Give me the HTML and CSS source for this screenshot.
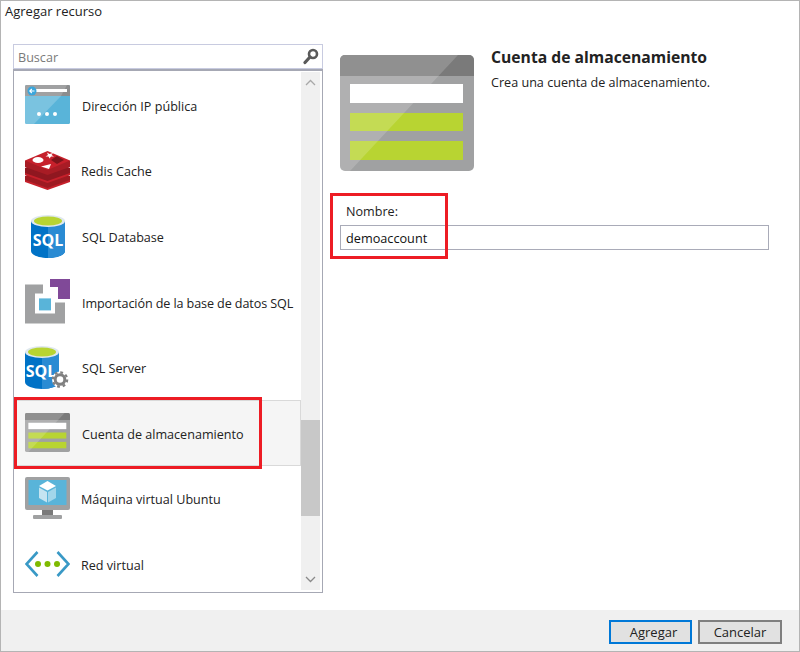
FILE: index.html
```html
<!DOCTYPE html>
<html lang="es">
<head>
<meta charset="utf-8">
<title>Agregar recurso</title>
<link rel="stylesheet" href="styles.css">
</head>
<body>
<svg class="defs" width="0" height="0" aria-hidden="true">
  <symbol id="storage" viewBox="0 0 134 116">
    <rect width="134" height="116" rx="5" fill="#a0a1a2"/>
    <path d="M5 0H129a5 5 0 0 1 5 5V21H0V5a5 5 0 0 1 5-5z" fill="#7a7a7a"/>
    <rect x="10" y="29" width="113" height="19" fill="#fff"/>
    <rect x="10" y="58" width="113" height="18" fill="#b8d432"/>
    <rect x="10" y="86" width="113" height="19" fill="#b8d432"/>
    <path d="M5 0H118L10 116H5a5 5 0 0 1-5-5V5a5 5 0 0 1 5-5z" fill="#fff" opacity=".17"/>
  </symbol>
  <symbol id="cyl" viewBox="0 0 34 43">
    <path d="M0 6V36C0 40 8 43 17 43S34 40 34 36V6z" fill="#0072c6"/>
    <path d="M17 6H34V36C34 40 26 43 17 43z" fill="#2a8bd3"/>
    <ellipse cx="17" cy="6" rx="17" ry="6" fill="#dfe8ef"/>
    <ellipse cx="17" cy="6" rx="14" ry="4.6" fill="#b8d432"/>
  </symbol>
</svg>

<main class="window">
  <header class="title">Agregar recurso</header>

  <div class="body">
    <section class="picker">
      <div class="search">
        <input class="search-input" type="text" placeholder="Buscar">
        <svg class="search-icon" width="16" height="17" viewBox="0 0 16 17">
          <circle cx="10" cy="6" r="4" fill="none" stroke="#5a5a5a" stroke-width="2.6"/>
          <path d="M7 9L2 14.5" stroke="#5a5a5a" stroke-width="3.2" stroke-linecap="round"/>
        </svg>
      </div>

      <div class="listbox">
        <ul class="list">
          <li class="row">
            <svg class="icon" viewBox="0 0 45 46">
              <rect y="3" width="45" height="39" rx="1.5" fill="#59b4d9"/>
              <path d="M1.5 3H43.500a1.500 1.500 0 0 1 1.500 1.500V14H0V4.500A1.500 1.500 0 0 1 1.500 3z" fill="#a0a1a2"/>
              <path d="M36 14H45V4.500A1.500 1.500 0 0 0 43.500 3H42z" fill="#8c8d8e"/>
              <path d="M36 14L9 42H1.500A1.500 1.500 0 0 1 0 40.500V14z" fill="#fff" opacity=".2"/>
              <rect x="9" y="7" width="33" height="3" fill="#fff"/>
              <circle cx="7" cy="9" r="4.500" fill="#3aa6dc"/>
              <path d="M9.500 9H5M6.800 7L4.800 9L6.800 11" fill="none" stroke="#fff" stroke-width="1.100"/>
              <circle cx="14" cy="32" r="2" fill="#fff"/>
              <circle cx="22" cy="32" r="2" fill="#fff"/>
              <circle cx="30" cy="32" r="2" fill="#fff"/>
            </svg>
            <span class="label">Dirección IP pública</span>
          </li>
          <li class="row row-tight">
            <svg class="icon" viewBox="0 0 45 46">
              <path d="M0 29L22.500 20L45 29V34L22.500 42L0 34z" fill="#9e1a22"/>
              <path d="M0 21L22.500 12L45 21V27L22.500 35L0 27z" fill="#8f1720"/>
              <path d="M0 13.500V20L22.500 28L45 20V13.500z" fill="#a81c25"/>
              <path d="M0 26V28L22.500 36L45 28V26L22.500 34z" fill="#c6202b"/>
              <path d="M0 33V35L22.500 43L45 35V33L22.500 41z" fill="#c6202b"/>
              <path d="M22.500 4L45 13.500L22.500 23L0 13.500z" fill="#c6202b"/>
              <ellipse cx="13" cy="13" rx="5.500" ry="3" fill="#fff"/>
              <path d="M22 5.500L24.500 7L28 6L26.500 8L29 9.500H26L24.500 11.500L23.500 9.500H20.500L23 8z" fill="#fff"/>
              <path d="M16 19.500L26 17L24 22z" fill="#fff"/>
              <path d="M32 9L39 13L32 17L26 13z" fill="#7d141b"/>
            </svg>
            <span class="label">Redis Cache</span>
          </li>
          <li class="row">
            <svg class="icon" viewBox="0 0 45 46">
              <use href="#cyl" x="6" y="2" width="34" height="43"/>
              <text class="sql" x="23" y="33">SQL</text>
            </svg>
            <span class="label">SQL Database</span>
          </li>
          <li class="row">
            <svg class="icon" viewBox="0 0 45 46">
              <path d="M0 5.400H18V14.400H10V34.400H30V23.400H40V44.400H0z" fill="#a0a1a2"/>
              <rect x="14" y="19.400" width="12" height="12" fill="#59b4d9"/>
              <path d="M25 0H45V20H33V8H25z" fill="#804998"/>
            </svg>
            <span class="label label-long">Importación de la base de datos SQL</span>
          </li>
          <li class="row">
            <svg class="icon" viewBox="0 0 45 46">
              <use href="#cyl" x="0" y="2" width="34" height="43"/>
              <text class="sql" x="16" y="33">SQL</text>
              <circle cx="35" cy="35.500" r="8" fill="#fff"/>
              <circle cx="35" cy="35.500" r="4.800" fill="none" stroke="#808080" stroke-width="3"/>
              <circle cx="35" cy="35.500" r="7.200" fill="none" stroke="#808080" stroke-width="2.200" stroke-dasharray="2.800 2.860"/>
            </svg>
            <span class="label">SQL Server</span>
          </li>
          <li class="row row-selected">
            <svg class="icon icon-storage"><use href="#storage"/></svg>
            <span class="label">Cuenta de almacenamiento</span>
          </li>
          <li class="row row-tight">
            <svg class="icon" viewBox="0 0 45 46">
              <rect y="2" width="45" height="33" rx="2" fill="#a0a1a2"/>
              <rect x="3.500" y="5" width="38" height="25" fill="#59b4d9"/>
              <path d="M17 35H28V40H17z" fill="#7a7a7a"/>
              <rect x="8" y="40" width="29" height="4" rx="1" fill="#a0a1a2"/>
              <path d="M22.500 6L31 11L22.500 15.500L14 11z" fill="#fff"/>
              <path d="M14 12.500L22 17V27.500L14 23z" fill="#c4e4f1"/>
              <path d="M31 12.500L23 17V27.500L31 23z" fill="#a3d6ea"/>
            </svg>
            <span class="label">Máquina virtual Ubuntu</span>
          </li>
          <li class="row row-tight">
            <svg class="icon" viewBox="0 0 45 46">
              <path d="M12.500 11L1.500 23L12.500 35M32.500 11L43.500 23L32.500 35" fill="none" stroke="#3999c6" stroke-width="2.600"/>
              <circle cx="13" cy="23" r="3" fill="#7fba00"/>
              <circle cx="22.500" cy="23" r="3" fill="#7fba00"/>
              <circle cx="32" cy="23" r="3" fill="#7fba00"/>
            </svg>
            <span class="label">Red virtual</span>
          </li>
        </ul>
        <div class="scrollbar">
          <svg class="arrow" width="19" height="20" viewBox="0 0 19 20"><path d="M5 13L9.500 8.500L14 13" fill="none" stroke="#a8a8a8" stroke-width="1.300"/></svg>
          <div class="thumb"></div>
          <svg class="arrow" width="19" height="20" viewBox="0 0 19 20"><path d="M5 7L9.500 11.500L14 7" fill="none" stroke="#8a8a8a" stroke-width="1.300"/></svg>
        </div>
      </div>
      <div class="callout callout-row"></div>
    </section>

    <section class="detail">
      <div class="detail-head">
        <svg class="hero"><use href="#storage"/></svg>
        <div class="detail-text">
          <h1 class="detail-title">Cuenta de almacenamiento</h1>
          <p class="detail-desc">Crea una cuenta de almacenamiento.</p>
        </div>
      </div>
      <div class="field">
        <label class="field-label" for="nombre">Nombre:</label>
        <input class="field-input" id="nombre" type="text" value="demoaccount">
        <div class="callout callout-field"></div>
      </div>
    </section>
  </div>

  <footer class="footer">
    <button class="btn btn-primary" type="button">Agregar</button>
    <button class="btn" type="button">Cancelar</button>
  </footer>
</main>
</body>
</html>
```

FILE: styles.css
```css
* { box-sizing: border-box; }

html, body {
  margin: 0;
  padding: 0;
  background: #fff;
}

body {
  font-family: "Open Sans", "Noto Sans", sans-serif;
  font-size: 12.6px;
  color: #222;
}

.defs { position: absolute; }

.window {
  width: 800px;
  height: 652px;
  display: flex;
  flex-direction: column;
  border: 1px solid #b4b4b4;
  background: #fff;
}

.title {
  height: 43px;
  padding: 1px 0 0 4px;
  font-size: 13px;
  line-height: 18px;
}

.body {
  flex: 1;
  display: flex;
  padding-left: 12px;
  min-height: 0;
}

.picker {
  position: relative;
  width: 310px;
  height: 549px;
  display: flex;
  flex-direction: column;
}

.search {
  position: relative;
  height: 25px;
  flex: none;
  border: 1px solid #c8cbe0;
}

.search-input {
  width: 100%;
  height: 100%;
  border: 0;
  outline: 0;
  padding: 2px 24px 0 4px;
  font: inherit;
  background: transparent;
}

.search-input::placeholder { color: #7a7a7a; opacity: 1; }

.search-icon {
  position: absolute;
  right: 3px;
  top: 3px;
}

.listbox {
  height: 524px;
  flex: none;
  display: flex;
  padding: 1px 2px 2px 0;
  border: 1px solid #a6a8b4;
  border-top-width: 2px;
}

.list {
  flex: 1;
  min-width: 0;
  margin: 0;
  padding: 0 0 0 2px;
  list-style: none;
  overflow: hidden;
}

.row {
  height: 65.6px;
  display: flex;
  align-items: center;
  gap: 12px;
  padding-left: 9px;
  border: 1px solid transparent;
}

.row-tight { gap: 11px; }

.row-selected {
  background: #f5f5f5;
  border-color: #d9d9d9;
}

.icon {
  width: 45px;
  height: 46px;
  flex: none;
  margin-left: -1px;
}

.icon-storage { height: 39px; }

.sql {
  font: 700 16px "Open Sans", sans-serif;
  fill: #fff;
  text-anchor: middle;
}

.label {
  padding-top: 3px;
  white-space: nowrap;
}

.label-long { letter-spacing: -0.1px; }

.scrollbar {
  width: 19px;
  flex: none;
  display: flex;
  flex-direction: column;
  background: #f0f0f0;
}

.arrow { flex: none; }

.thumb {
  height: 96px;
  margin-top: 328px;
  margin-bottom: auto;
  background: #c8c8c8;
}

.callout {
  position: absolute;
  border: 3px solid #ed1c24;
  pointer-events: none;
}

.callout-row {
  left: 1px;
  top: 353px;
  width: 248px;
  height: 72px;
}

.detail {
  flex: 1;
  padding: 3px 0 0 17px;
}

.detail-head {
  display: flex;
  gap: 17px;
}

.hero {
  width: 134px;
  height: 116px;
  flex: none;
  margin-top: 8px;
}

.detail-title {
  margin: 0;
  font-size: 15.7px;
  line-height: 20px;
  font-weight: 700;
}

.detail-desc {
  margin: 6px 0 0;
  line-height: 20px;
}

.field {
  position: relative;
  margin-top: 32px;
  width: 429px;
}

.field-label {
  display: block;
  padding-left: 6px;
  line-height: 18px;
}

.field-input {
  display: block;
  width: 100%;
  height: 25px;
  margin-top: 4px;
  padding: 0 3px 0 5px;
  border: 1px solid #a9abb8;
  outline: 0;
  font: inherit;
  font-size: 12.7px;
  color: #111;
}

.callout-field {
  left: -10px;
  top: -10px;
  width: 118px;
  height: 66px;
}

.footer {
  height: 41px;
  flex: none;
  display: flex;
  justify-content: flex-end;
  gap: 6px;
  padding: 10px 17px 0 0;
  background: #f0f0f0;
}

.btn {
  width: 84px;
  height: 24px;
  padding: 0;
  border: 2px solid #7f7f7f;
  background: #e1e1e1;
  font: inherit;
  font-size: 13px;
  color: #222;
}

.btn-primary {
  width: 83px;
  padding-left: 6px;
  border-color: #0078d7;
}
```
